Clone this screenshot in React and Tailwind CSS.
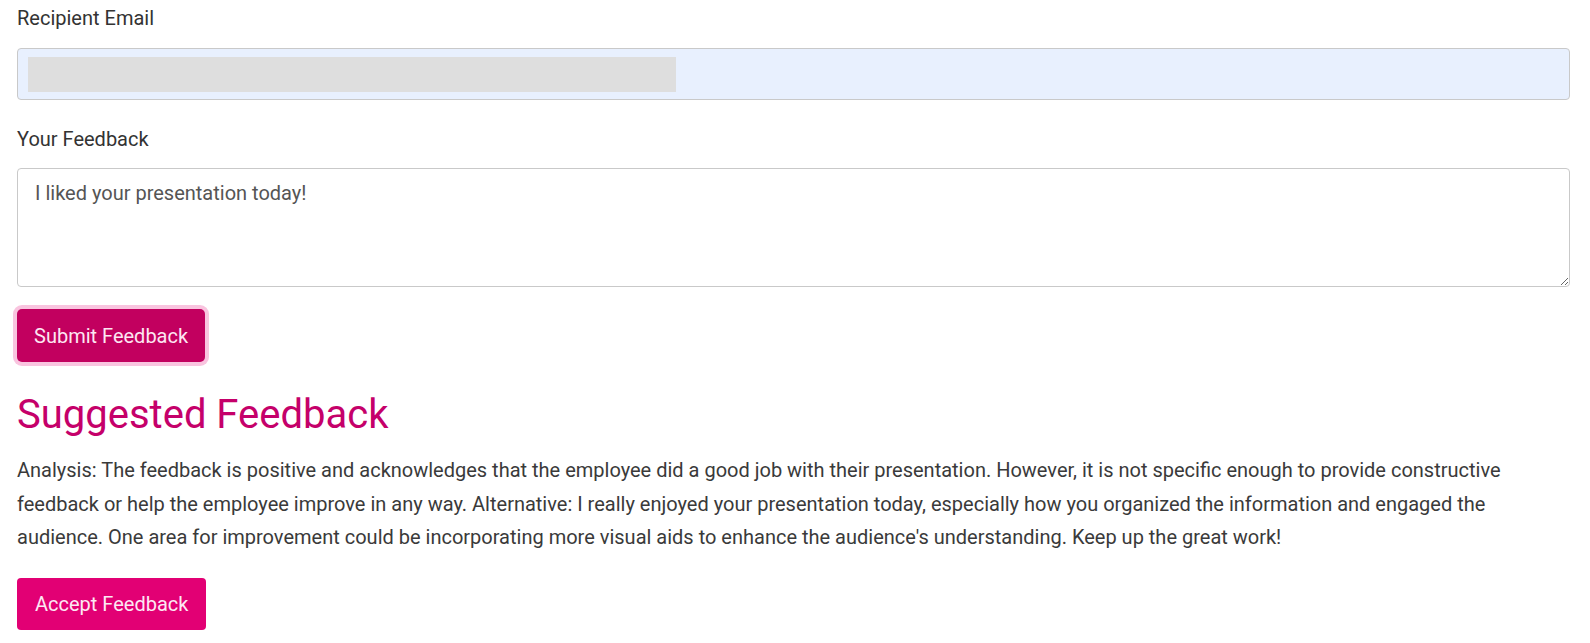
export default function App() {
  const font = { fontFamily: "Roboto, 'Liberation Sans', sans-serif" };
  return (
    <div className="w-[1590px] h-[643px] bg-white overflow-hidden" style={font}>
      <div className="pl-[17px] pr-[20px] pt-[5px]">
        <div className="text-[20px] leading-[27px] text-[#333333]">Recipient Email</div>
        <div className="mt-[16px] h-[52px] rounded-[4px] border border-[#c9c9c9] bg-[#e8f0fe] pl-[10px] pt-[8px]">
          <div className="h-[35px] w-[648px] bg-[#dedede]"></div>
        </div>
        <div className="mt-[26px] text-[20px] leading-[27px] text-[#333333]">Your Feedback</div>
        <textarea
          readOnly
          defaultValue="I liked your presentation today!"
          className="mt-[15px] block h-[119px] w-full rounded-[4px] border border-[#c9c9c9] bg-white px-[17px] pt-[11px] text-[20px] leading-[27px] text-[#555555] outline-none"
          style={font}
        />
        <div className="mt-[22px] flex">
          <button className="h-[53px] rounded-[5px] bg-[#c2005f] px-[17px] text-[20px] text-[#fde6f2] ring-4 ring-[#f9c4df]">
            Submit Feedback
          </button>
        </div>
        <h2 className="mt-[29px] text-[40px] leading-[48px] text-[#c5006a]">Suggested Feedback</h2>
        <p className="mt-[15px] text-[20px] leading-[33.5px] text-[#3a3a3a]">
          Analysis: The feedback is positive and acknowledges that the employee did a good job with their presentation. However, it is not specific enough to provide constructive feedback or help the employee improve in any way. Alternative: I really enjoyed your presentation today, especially how you organized the information and engaged the audience. One area for improvement could be incorporating more visual aids to enhance the audience's understanding. Keep up the great work!
        </p>
        <div className="mt-[23px] flex">
          <button className="h-[52px] rounded-[4px] bg-[#e20074] px-[18px] text-[20px] text-[#fde8f3]">
            Accept Feedback
          </button>
        </div>
      </div>
    </div>
  );
}
